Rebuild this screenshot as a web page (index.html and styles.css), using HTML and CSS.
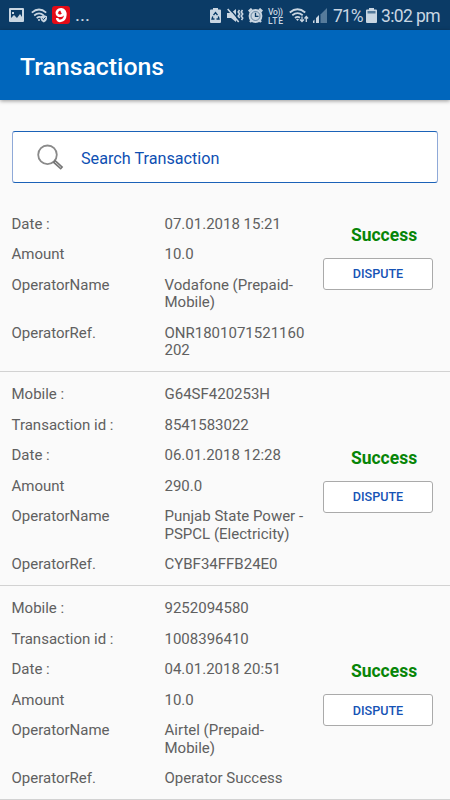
FILE: index.html
```html
<!DOCTYPE html>
<html lang="en">
<head>
<meta charset="utf-8">
<title>Transactions</title>
<link rel="stylesheet" href="styles.css">
</head>
<body>
<header class="statusbar">
  <svg class="ic-photo" width="15" height="15" viewBox="0 0 15 15"><path fill="#c9d6e2" fill-rule="evenodd" d="M1 0h13q1 0 1 1v12q0 1-1 1H1q-1 0-1-1V1q0-1 1-1zM2 2v8l3-3 3 3 3-4 2 3V2zM3 4h2v2H3z"/></svg>
  <svg class="ic-wifi" width="17" height="15" viewBox="0 0 17 15" fill="none" stroke="#c9d6e2" stroke-width="1.7"><path d="M.8 4.7Q8 -1.7 15.2 4.7M3.2 7.5Q8 3.3 12.7 7.3M5.7 10.2Q8 8.3 10 9.3"/><circle cx="8" cy="12" r="1" fill="#c9d6e2" stroke="none"/><path fill="#c9d6e2" stroke="none" d="M12.8 7l3.2 1.2v2.7q-.5 2.5-3.2 3.6-2.7-1.1-3.2-3.6V8.200z"/><path stroke="#0b3b66" stroke-width="1" d="M11.300 10.500l1.200 1.200 2-2.300"/></svg>
  <svg class="ic-nine" width="18" height="18" viewBox="0 0 18 18"><rect width="18" height="18" rx="3" fill="#e30b17"/><path fill="none" stroke="#fff" stroke-width="2.600" d="M9.500 3.300C6 3 4.300 5.500 5 7.800 6 10.800 11 10 11 7.500c0-1.500-1-2.300-2.300-2M9.500 3.300c5.500.5 5 10.700-.8 11.500-2.200.3-3.500-.8-3.500-2.700"/></svg>
  <span class="dots">...</span>
  <div class="right">
    <svg class="ic-recycle" width="11" height="15" viewBox="0 0 11 15"><path fill="#c9d6e2" d="M3 0h5v1.500h2q1 0 1 1V14q0 1-1 1H1q-1 0-1-1V2.500q0-1 1-1h2z"/><path fill="none" stroke="#0b3b66" stroke-width="1.300" d="M3.500 7.200L5.500 4.500l2 2.700M8.300 8.500l.7 2.500H6.500M4.500 11H2l.8-2.500"/></svg>
    <svg class="ic-mute" width="17" height="15" viewBox="0 0 17 15"><path fill="#c9d6e2" d="M0 5h4l5-4v13l-5-4H0z"/><path stroke="#0b3b66" stroke-width="1.300" d="M2 0l11 13"/><path fill="none" stroke="#c9d6e2" stroke-width="1.600" d="M.7 1l11 13M12.500 2l-1.300 2 1.500 2-1.500 2 1.500 2M15.500 2l-1.300 2 1.500 2-1.500 2 1.500 2-1.200 2"/></svg>
    <svg class="ic-alarm" width="15" height="15" viewBox="0 0 15 15"><circle cx="7.500" cy="8" r="6.900" fill="#c9d6e2"/><path stroke="#c9d6e2" stroke-width="2.400" d="M.8 3.500l3-2.700M14.200 3.500l-3-2.700M2 14l2-2M13 14l-2-2"/><circle cx="7.500" cy="8" r="4.500" fill="none" stroke="#0b3b66" stroke-width=".5"/><path fill="none" stroke="#0b3b66" stroke-width="1.300" d="M7.500 4.800v3.500h3"/></svg>
    <svg class="volte" width="16" height="17" viewBox="0 0 16 17"><text x="0" y="7.500" textLength="15">Vo))</text><text x="0" y="16.500" textLength="15">LTE</text></svg>
    <svg class="ic-wifi2" width="20" height="15" viewBox="0 0 20 15" fill="none" stroke="#c9d6e2" stroke-width="1.800"><path d="M.8 4.500Q8.500-2 16.200 4.500M3.300 7.200Q8.500 3 13.700 7.200M6 10Q8.500 7.800 11 9.700"/><path fill="#c9d6e2" stroke="none" d="M7 11.300q1.500-1 3 0L8.500 13z"/><path stroke-width="1.300" d="M13 8.500v5M11 11.500l2 2 2-2M17.300 14V8.500M15.500 10.500l1.800-2 1.800 2"/></svg>
    <svg class="ic-signal" width="15" height="15" viewBox="0 0 15 15"><path fill="#567b9b" d="M8.500 6.500L15 0v15H8.500z"/><path fill="#c9d6e2" d="M1 15v-2l1.500-1.500V15zM4 15v-5l3-3v8z"/></svg>
    <span class="pct">71%</span>
    <svg class="ic-batt" width="11" height="15" viewBox="0 0 11 15"><path fill="#c9d6e2" d="M3 0h5v1.500h2q1 0 1 1V14q0 1-1 1H1q-1 0-1-1V2.500q0-1 1-1h2z"/><path fill="#567b9b" d="M1.500 3h8v2.500h-8z"/></svg>
    <span class="clock">3:02 pm</span>
  </div>
</header>
<div class="appbar"><h1>Transactions</h1></div>
<div class="search">
  <svg width="27" height="26" viewBox="0 0 27 26" fill="none"><circle cx="10.500" cy="10.800" r="9.300" stroke="#8a8a8a" stroke-width="1.800"/><path stroke="#777" stroke-width="3.800" d="M16.800 17l8.200 7.400"/><path stroke="#d0d0d0" stroke-width="1" d="M18 18l6 5.500"/></svg>
  <span>Search Transaction</span>
</div>
<main>
  <section class="item first">
    <dl>
      <dt>Date :</dt><dd>07.01.2018 15:21</dd>
      <dt>Amount</dt><dd>10.0</dd>
      <dt>OperatorName</dt><dd>Vodafone (Prepaid-<br>Mobile)</dd>
      <dt>OperatorRef.</dt><dd>ONR1801071521160<br>202</dd>
    </dl>
    <div class="state"><strong>Success</strong><button>DISPUTE</button></div>
  </section>
  <section class="item">
    <dl>
      <dt>Mobile :</dt><dd>G64SF420253H</dd>
      <dt>Transaction id :</dt><dd>8541583022</dd>
      <dt>Date :</dt><dd>06.01.2018 12:28</dd>
      <dt>Amount</dt><dd>290.0</dd>
      <dt>OperatorName</dt><dd>Punjab State Power -<br>PSPCL (Electricity)</dd>
      <dt>OperatorRef.</dt><dd>CYBF34FFB24E0</dd>
    </dl>
    <div class="state"><strong>Success</strong><button>DISPUTE</button></div>
  </section>
  <section class="item">
    <dl>
      <dt>Mobile :</dt><dd>9252094580</dd>
      <dt>Transaction id :</dt><dd>1008396410</dd>
      <dt>Date :</dt><dd>04.01.2018 20:51</dd>
      <dt>Amount</dt><dd>10.0</dd>
      <dt>OperatorName</dt><dd>Airtel (Prepaid-<br>Mobile)</dd>
      <dt>OperatorRef.</dt><dd>Operator Success</dd>
    </dl>
    <div class="state"><strong>Success</strong><button>DISPUTE</button></div>
  </section>
</main>
</body>
</html>
```
FILE: styles.css
```css
* { box-sizing: border-box; }
body { margin: 0; width: 450px; height: 800px; overflow: hidden; background: #fafafa; font-family: Roboto, sans-serif; color: #606060; }
svg { display: block; flex: none; }
.statusbar { height: 30px; background: #0b3b66; color: #c9d6e2; display: flex; align-items: center; padding: 0 10px 0 9px; white-space: nowrap; }
.ic-wifi { margin-left: 7px; }
.ic-nine { margin-left: 4px; }
.dots { font-size: 19px; line-height: 30px; margin-left: 5px; }
.right { margin-left: auto; display: flex; align-items: center; height: 30px; padding-top: 1px; }
.ic-mute { margin-left: 6px; }
.ic-alarm { margin-left: 4px; }
.volte { margin-left: 5px; font-size: 8.5px; font-weight: 500; fill: #c9d6e2; }
.ic-wifi2 { margin-left: 5px; }
.ic-signal { margin-left: 3px; }
.pct { font-size: 17.500px; width: 31px; margin-left: 6px; letter-spacing: -1px; }
.ic-batt { margin-left: 2px; }
.clock { font-size: 17.500px; margin-left: 4px; width: 59px; letter-spacing: -.6px; }
.appbar { position: relative; height: 70px; background: #0066bc; box-shadow: 0 1px 4px rgba(0,0,0,.4); display: flex; align-items: center; padding: 3px 20px 0; }
h1 { margin: 0; font-size: 24.800px; font-weight: 500; color: #fff; line-height: 30px; }
.search { margin: 31px 12px 0; height: 52px; background: #fff; border: 1px solid #1b62b8; border-left-color: #8fa9d8; border-right-color: #8fa9d8; border-radius: 3px; display: flex; align-items: center; padding-left: 24px; gap: 17px; font-size: 16.200px; color: #0e4fb3; }
.search span { padding-top: 2px; }
.item { display: flex; align-items: center; padding: 14.600px 17px 11.400px 11.500px; height: 213.800px; border-bottom: 1px solid #d2d2d2; }
.item.first { margin-top: 18px; height: 171px; }
dl { margin: 0; width: 311.500px; display: grid; grid-template-columns: 153px 1fr; row-gap: 13px; font-size: 15px; line-height: 17.500px; }
dt, dd { margin: 0; white-space: nowrap; }
.state { flex: 1; display: flex; flex-direction: column; align-items: center; gap: 12px; }
.first .state { margin-bottom: 61px; }
.state strong { font-size: 17.500px; line-height: 21px; color: #078507; padding-left: 12px; }
button { width: 110px; height: 32px; padding: 0; font: 500 12.600px Roboto, sans-serif; color: #1553b5; background: #fff; border: 1px solid #aaa; border-radius: 3px; }
```
